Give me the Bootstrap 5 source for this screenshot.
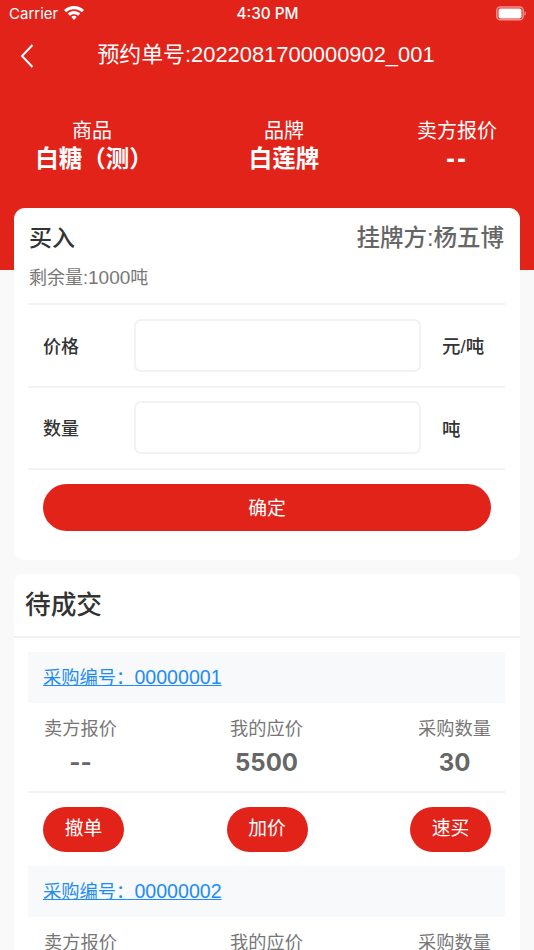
<!doctype html>
<html lang="zh"><head><meta charset="utf-8">
<link href="https://cdn.jsdelivr.net/npm/bootstrap@5.3.0/dist/css/bootstrap.min.css" rel="stylesheet">
<style>
html,body{height:950px;overflow:hidden}
body{background:#f9f9f9;font-family:"Liberation Sans","Noto Sans CJK SC",sans-serif;color:#333;width:534px}
.hero{background:#e2231a;color:#fff;height:270px}
.statusbar{height:28px;padding:0 9px;font-family:Inter,"Liberation Sans",sans-serif;font-size:15px}
.statusbar .sb-time{font-weight:500;font-size:15.300px;padding-right:1px}
.sb-left,.sb-right{width:120px}
.sb-left{gap:6px}
.sb-left span{padding-top:1px}
.sb-left svg{margin-top:-2px}
.sb-right{margin-right:-2px}
.sb-right svg{margin-top:-2px}
.navrow{height:54px;padding-left:18px;padding-top:2px}
.navrow .nav-ttl{font-size:21.900px;width:100%;text-align:center;line-height:1;margin:-2px 0 0 -29px}
.inforow{margin-top:37px;text-align:center}
.info-a{width:184px}.info-b{width:200px}.info-c{width:146px}
.info-lbl{font-size:20px;line-height:25px;height:25px}
.info-val{font-size:23.5px;font-weight:700;line-height:30px;height:30px}
.info-a .info-val{padding-left:4px}
.wide-dash{letter-spacing:2px;font-size:27px}
.buy-card{margin:-62px 14px 0;height:352px;background:#fff;border-radius:11px;padding:0 15px 0 14px}
.buy-top{padding-top:14px;height:40px;line-height:32px}
.buy-ttl{font-size:23px;font-weight:500;color:#333;padding-left:1px}
.buy-owner{font-size:23.5px;font-weight:500;color:#666;margin-right:1px}
.buy-rest{font-size:18px;color:#777;height:57px;line-height:60px;border-bottom:2px solid #f3f3f3;padding-left:1px}
.buy-rest span{font-size:19px}
.form-line{height:82.500px;border-bottom:2px solid #f3f3f3;padding:14px 0}
.f-lbl{width:106px;padding-left:15px;font-size:18px;font-weight:500;color:#333;padding-top:4px}
.f-ipt{width:287px;height:53px;border:2px solid #f2f2f2;border-radius:7px;box-shadow:none}
.f-unit{font-size:18.500px;font-weight:500;padding-left:21px;color:#333;padding-top:4px}
.ok-btn{display:block;margin:14px 15px 0;width:448px;height:47px;border-radius:24px;background:#e2231a;color:#fff;font-size:18.800px;border:0;padding:0;line-height:49px}
.list-card{margin:14px 14px 0;background:#fff;border-radius:8px 8px 0 0;height:400px;overflow:hidden}
.list-head{height:64px;border-bottom:2px solid #f1f1f1;padding-left:11px;font-size:25.700px;font-weight:500;line-height:63px;color:#333}
.list-body{padding:14px 15px 0 14px}
.po-box{height:51px;background:#f8f9fb;padding-left:15px;line-height:50px;font-size:18.3px}
.po-box a{color:#1e8cf5}
.po-box span{font-size:19.600px}
.po-cols{padding:12px 13px 0 15px;height:90px;border-bottom:2px solid #f1f1f1}
.po-col{text-align:center;width:75px}
.po-col.mid{margin-right:2px}
.po-lbl{font-size:18.2px;color:#777;line-height:28px;white-space:nowrap;display:flex;justify-content:center}
.po-val{font-size:24px;font-family:Inter,"Liberation Sans",sans-serif;font-weight:700;color:#666;line-height:40px}
.po-btns{padding:14px 14px 14px 15px}
.po-btn{width:81px;height:45px;border-radius:23px;background:#e2231a;color:#fff;font-size:18.800px;border:0;padding:0}
</style></head>
<body>
<div class="hero">
  <div class="statusbar d-flex align-items-center justify-content-between">
    <div class="sb-left d-flex align-items-center"><span>Carrier</span>
      <svg width="20" height="15" viewBox="0 0 20 15" fill="#fff"><path d="M10 0C13.800 0 17.300 1.500 20 4L17.800 6.300C15.700 4.400 13 3.200 10 3.200S4.300 4.400 2.200 6.300L0 4C2.700 1.500 6.200 0 10 0Z"/><path d="M10 5C12.400 5 14.600 5.900 16.300 7.500L14.100 9.800C13 8.800 11.600 8.200 10 8.200S7 8.800 5.900 9.800L3.700 7.500C5.400 5.900 7.600 5 10 5Z"/><path d="M10 9.800C11 9.800 12 10.200 12.700 10.900L10 14 7.300 10.900C8 10.200 9 9.800 10 9.800Z"/></svg>
    </div>
    <div class="sb-time">4:30 PM</div>
    <div class="sb-right d-flex justify-content-end">
      <svg width="31" height="15" viewBox="0 0 31 15"><rect x=".8" y="1" width="26.400" height="12.800" rx="3.500" fill="none" stroke="#fff" stroke-opacity=".5" stroke-width="1.500"/><rect x="2.500" y="2.500" width="23" height="10" rx="2" fill="#fff"/><path d="M28.500 5.200c1 .3 1.500 1.100 1.500 2.200s-.5 1.900-1.500 2.200z" fill="#fff" fill-opacity=".5"/></svg>
    </div>
  </div>
  <div class="navrow d-flex align-items-center">
    <svg width="19" height="24" viewBox="0 0 19 24" fill="none" stroke="#fff" stroke-width="2"><path d="M14.500 1 4 12 14.500 23"/></svg>
    <div class="nav-ttl">预约单号:2022081700000902_001</div>
  </div>
  <div class="inforow d-flex">
    <div class="info-a"><div class="info-lbl">商品</div><div class="info-val">白糖（测）</div></div>
    <div class="info-b"><div class="info-lbl">品牌</div><div class="info-val">白莲牌</div></div>
    <div class="info-c"><div class="info-lbl">卖方报价</div><div class="info-val wide-dash">--</div></div>
  </div>
</div>
<div class="buy-card">
  <div class="buy-top d-flex justify-content-between"><span class="buy-ttl">买入</span><span class="buy-owner">挂牌方:杨五博</span></div>
  <div class="buy-rest">剩余量:<span>1000</span>吨</div>
  <div class="form-line d-flex align-items-center"><span class="f-lbl">价格</span><input class="form-control f-ipt" type="text" aria-label="价格"><span class="f-unit">元/吨</span></div>
  <div class="form-line d-flex align-items-center"><span class="f-lbl">数量</span><input class="form-control f-ipt" type="text" aria-label="数量"><span class="f-unit">吨</span></div>
  <button class="btn ok-btn">确定</button>
</div>
<div class="list-card">
  <div class="list-head">待成交</div>
  <div class="list-body">
    <div class="po-box"><a href="#">采购编号：<span>00000001</span></a></div>
    <div class="po-cols d-flex justify-content-between">
      <div class="po-col"><div class="po-lbl">卖方报价</div><div class="po-val">--</div></div>
      <div class="po-col mid"><div class="po-lbl">我的应价</div><div class="po-val">5500</div></div>
      <div class="po-col"><div class="po-lbl">采购数量</div><div class="po-val">30</div></div>
    </div>
    <div class="po-btns d-flex justify-content-between"><button class="btn po-btn">撤单</button><button class="btn po-btn">加价</button><button class="btn po-btn">速买</button></div>
    <div class="po-box"><a href="#">采购编号：<span>00000002</span></a></div>
    <div class="po-cols d-flex justify-content-between">
      <div class="po-col"><div class="po-lbl">卖方报价</div><div class="po-val">--</div></div>
      <div class="po-col mid"><div class="po-lbl">我的应价</div><div class="po-val">5500</div></div>
      <div class="po-col"><div class="po-lbl">采购数量</div><div class="po-val">30</div></div>
    </div>
  </div>
</div>
<script src="https://cdn.jsdelivr.net/npm/bootstrap@5.3.0/dist/js/bootstrap.bundle.min.js"></script>
</body></html>
